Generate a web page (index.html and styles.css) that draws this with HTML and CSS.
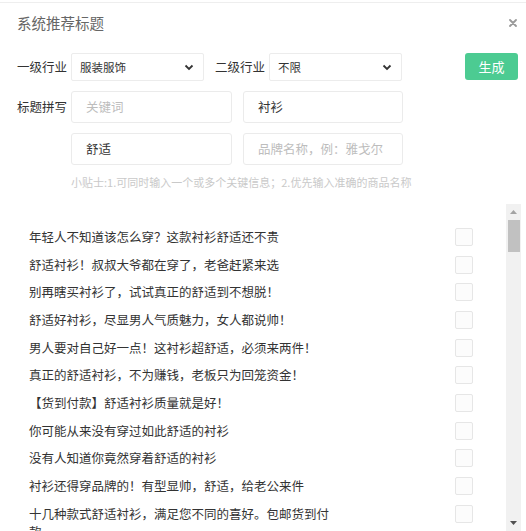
FILE: index.html
```html
<!DOCTYPE html>
<html lang="zh">
<head>
<meta charset="utf-8">
<title>系统推荐标题</title>
<link rel="stylesheet" href="styles.css">
</head>
<body>
<div class="dialog">
  <div class="header">
    <div class="title">系统推荐标题</div>
    <svg class="close" width="8" height="8" viewBox="0 0 8 8"><path d="M1 1L7 7M7 1L1 7" stroke="#9a9a9a" stroke-width="1.8" stroke-linecap="round"/></svg>
  </div>
  <div class="form">
    <div class="row">
      <span class="label">一级行业</span>
      <div class="select"><span>服装服饰</span><svg width="10" height="7" viewBox="0 0 10 7"><path d="M1.5 1.5L5 5L8.5 1.5" fill="none" stroke="#333" stroke-width="1.8"/></svg></div>
      <span class="label label2">二级行业</span>
      <div class="select"><span>不限</span><svg width="10" height="7" viewBox="0 0 10 7"><path d="M1.5 1.5L5 5L8.5 1.5" fill="none" stroke="#333" stroke-width="1.8"/></svg></div>
      <button class="btn">生成</button>
    </div>
    <div class="row row-top">
      <span class="label label-top">标题拼写</span>
      <div class="inputs">
        <div class="input placeholder">关键词</div>
        <div class="input">衬衫</div>
        <div class="input">舒适</div>
        <div class="input placeholder">品牌名称，例：雅戈尔</div>
      </div>
    </div>
    <div class="tip">小贴士:1.可同时输入一个或多个关键信息；2.优先输入准确的商品名称</div>
  </div>
  <div class="list-wrap">
    <div class="list">
      <div class="item"><span class="text">年轻人不知道该怎么穿？这款衬衫舒适还不贵</span><span class="check"></span></div>
      <div class="item"><span class="text">舒适衬衫！叔叔大爷都在穿了，老爸赶紧来选</span><span class="check"></span></div>
      <div class="item"><span class="text">别再瞎买衬衫了，试试真正的舒适到不想脱！</span><span class="check"></span></div>
      <div class="item"><span class="text">舒适好衬衫，尽显男人气质魅力，女人都说帅！</span><span class="check"></span></div>
      <div class="item"><span class="text">男人要对自己好一点！这衬衫超舒适，必须来两件！</span><span class="check"></span></div>
      <div class="item"><span class="text">真正的舒适衬衫，不为赚钱，老板只为回笼资金！</span><span class="check"></span></div>
      <div class="item"><span class="text">【货到付款】舒适衬衫质量就是好！</span><span class="check"></span></div>
      <div class="item"><span class="text">你可能从来没有穿过如此舒适的衬衫</span><span class="check"></span></div>
      <div class="item"><span class="text">没有人知道你竟然穿着舒适的衬衫</span><span class="check"></span></div>
      <div class="item"><span class="text">衬衫还得穿品牌的！有型显帅，舒适，给老公来件</span><span class="check"></span></div>
      <div class="item"><span class="text">十几种款式舒适衬衫，满足您不同的喜好。包邮货到付款</span><span class="check"></span></div>
    </div>
    <div class="scrollbar">
      <div class="sb-btn"><svg width="7" height="4" viewBox="0 0 7 4"><path d="M0 4L3.5 0L7 4Z" fill="#a3a3a3"/></svg></div>
      <div class="sb-thumb"></div>
      <div class="sb-track"></div>
      <div class="sb-btn"><svg width="7" height="4" viewBox="0 0 7 4"><path d="M0 0L3.5 4L7 0Z" fill="#505050"/></svg></div>
    </div>
  </div>
</div>
</body>
</html>
```
FILE: styles.css
```css
html, body {
  margin: 0;
  padding: 0;
  background: #fff;
  overflow: hidden;
}
body {
  font-family: "Noto Sans CJK SC", "Noto Sans", sans-serif;
  color: #333;
}
.dialog {
  margin-top: 2px;
  border-top: 1px solid #eeeeee;
}
.header {
  height: 40px;
  display: flex;
  align-items: center;
  justify-content: space-between;
  padding: 0 9px 0 17px;
}
.title {
  font-size: 14.5px;
  color: #666;
  line-height: 20px;
}
.close {
  display: block;
}
.form {
  padding: 0 8px 0 17px;
}
.row {
  display: flex;
  align-items: center;
  margin-top: 10px;
}
.row-top {
  align-items: flex-start;
}
.label {
  width: 54px;
  font-size: 12.5px;
  line-height: 28px;
  color: #333;
  flex: none;
}
.label-top {
  line-height: 32px;
}
.label2 {
  margin-left: 11px;
}
.select {
  width: 133px;
  height: 28px;
  box-sizing: border-box;
  border: 1px solid #ececec;
  border-radius: 2px;
  display: flex;
  align-items: center;
  justify-content: space-between;
  padding: 0 9px 0 8px;
  font-size: 11.5px;
  color: #333;
}
.select svg {
  display: block;
}
.btn {
  margin-left: auto;
  width: 53px;
  height: 27px;
  border: none;
  border-radius: 3px;
  background: #4ccb92;
  color: #fff;
  font-family: inherit;
  font-size: 13px;
  padding: 0;
  margin-top: -1px;
}
.inputs {
  display: grid;
  grid-template-columns: 161px 160px;
  column-gap: 11px;
  row-gap: 10px;
}
.input {
  height: 32px;
  box-sizing: border-box;
  border: 1px solid #ebebeb;
  border-radius: 3px;
  padding-left: 14px;
  font-size: 12.5px;
  line-height: 30px;
  color: #333;
}
.input.placeholder {
  color: #bdbdbd;
}
.tip {
  margin: 9px 0 0 54px;
  font-size: 11px;
  line-height: 16px;
  color: #c9c9c9;
}
.list-wrap {
  display: flex;
  margin: 14px 5px 0 17px;
  height: 327px;
}
.list {
  flex: 1;
  overflow: hidden;
  padding: 19px 33px 0 12px;
}
.item {
  display: flex;
  align-items: flex-start;
  justify-content: space-between;
  padding: 4.85px 0;
}
.text {
  width: 306px;
  font-size: 12.5px;
  line-height: 18px;
  color: #333;
}
.check {
  flex: none;
  width: 18px;
  height: 18px;
  box-sizing: border-box;
  border: 1px solid #e6e6e6;
  border-radius: 2px;
  background: #fcfcfc;
}
.scrollbar {
  flex: none;
  width: 15px;
  background: #f1f1f1;
  display: flex;
  flex-direction: column;
}
.sb-btn {
  height: 16px;
  display: flex;
  align-items: center;
  justify-content: center;
}
.sb-btn svg {
  display: block;
}
.sb-thumb {
  height: 32px;
  margin: 0 1px 0 2px;
  background: #c1c1c1;
}
.sb-track {
  flex: 1;
}
```
